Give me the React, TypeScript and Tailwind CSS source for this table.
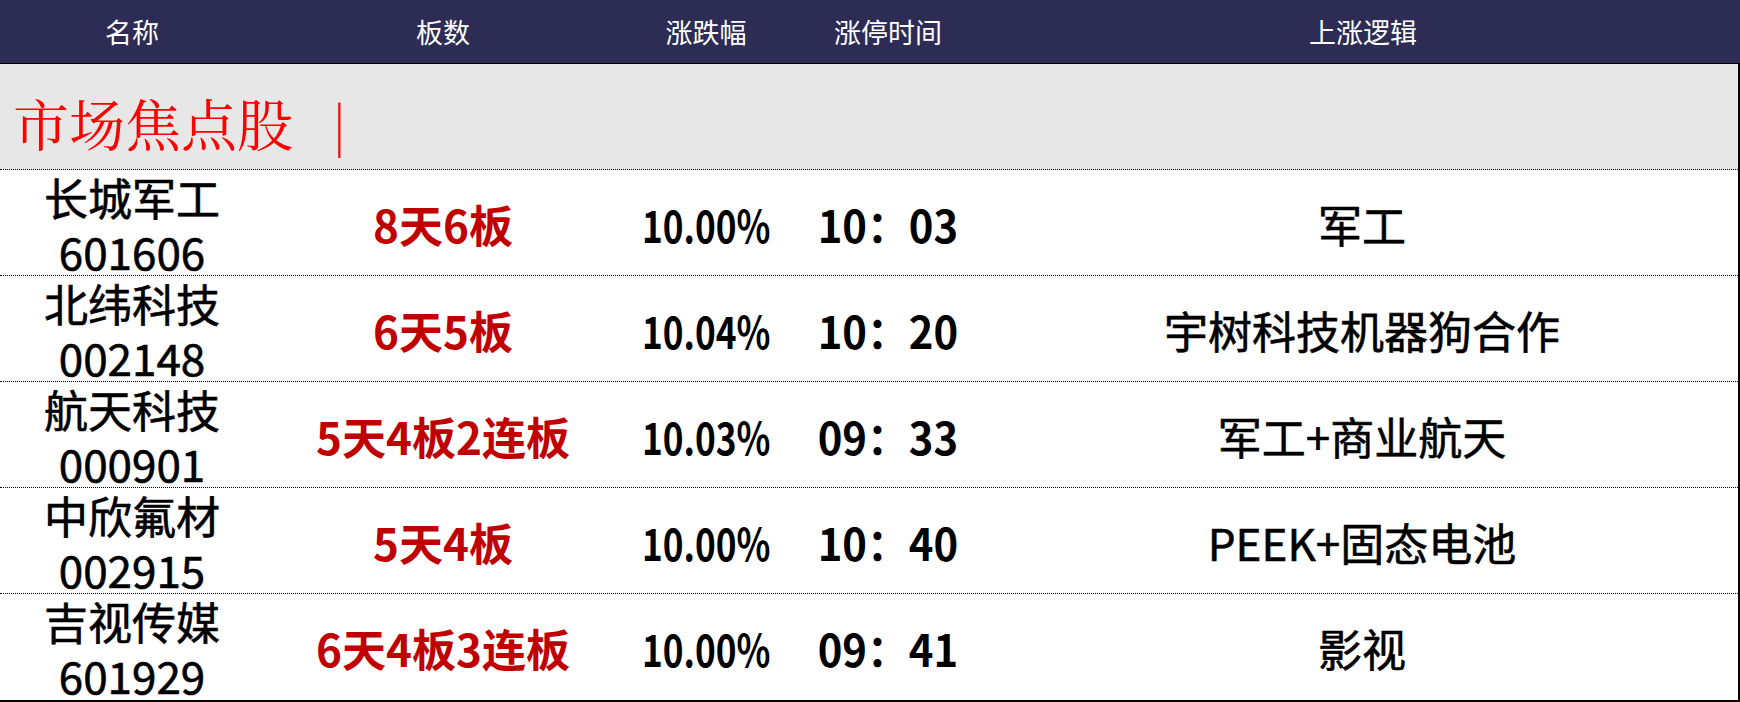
import React from "react";

type Stock = {
  name: string;
  code: string;
  boards: string;
  pct: string;
  time: string;
  logic: string;
};

const stocks: Stock[] = [
  { name: "长城军工", code: "601606", boards: "8天6板", pct: "10.00%", time: "10：03", logic: "军工" },
  { name: "北纬科技", code: "002148", boards: "6天5板", pct: "10.04%", time: "10：20", logic: "宇树科技机器狗合作" },
  { name: "航天科技", code: "000901", boards: "5天4板2连板", pct: "10.03%", time: "09：33", logic: "军工+商业航天" },
  { name: "中欣氟材", code: "002915", boards: "5天4板", pct: "10.00%", time: "10：40", logic: "PEEK+固态电池" },
  { name: "吉视传媒", code: "601929", boards: "6天4板3连板", pct: "10.00%", time: "09：41", logic: "影视" },
];

const cols = "grid grid-cols-[264px_358px_168px_196px_1fr]";
const sans = "font-['Noto_Sans_CJK_SC','Noto_Sans',sans-serif]";
const medium = "[-webkit-text-stroke:0.6px_black]";

export default function App() {
  return (
    <div className={`w-[1740px] h-[702px] overflow-hidden bg-white text-black ${sans}`}>
      {/* header */}
      <div className={`${cols} h-[64px] bg-[#2c2c54] border-b border-black text-white text-[27px] leading-none`}>
        <div className="flex items-center justify-center">名称</div>
        <div className="flex items-center justify-center">板数</div>
        <div className="flex items-center justify-center">涨跌幅</div>
        <div className="flex items-center justify-center">涨停时间</div>
        <div className="flex items-center justify-center">上涨逻辑</div>
      </div>

      <div className="border-r-2 border-black">
        {/* section title */}
        <div className="h-[106px] bg-[#e7e7e7] border-b border-dotted border-black flex items-center pt-[10px] pl-[13px]">
          <span className="font-['Noto_Serif_CJK_SC','Noto_Sans_CJK_SC',serif] text-[56px] leading-none text-[#ff0000]">
            市场焦点股
          </span>
          <span className="ml-[40px] text-[50px] leading-none text-[#ff0000] font-light">|</span>
        </div>

        {stocks.map((s, i) => {
          const last = i === stocks.length - 1;
          return (
            <div
              key={s.code}
              className={`${cols} ${last ? "h-[108px] border-b-2 border-solid" : "h-[106px] border-b border-dotted"} border-black`}
            >
              <div className={`flex flex-col items-center justify-center text-[44px] leading-[54px] whitespace-nowrap ${medium}`}>
                <div>{s.name}</div>
                <div>{s.code}</div>
              </div>
              <div className="flex items-center justify-center text-[44px] leading-none font-bold text-[#c00000] whitespace-nowrap">
                {s.boards}
              </div>
              <div className="flex items-center justify-center text-[44px] leading-none font-bold whitespace-nowrap">
                <span className="inline-block scale-x-[0.8]">{s.pct}</span>
              </div>
              <div className="flex items-center justify-center text-[44px] leading-none font-bold whitespace-nowrap">
                <span className="inline-block scale-x-[0.95]">{s.time}</span>
              </div>
              <div className={`flex items-center justify-center text-[44px] leading-none whitespace-nowrap ${medium}`}>
                {s.logic}
              </div>
            </div>
          );
        })}
      </div>
    </div>
  );
}
